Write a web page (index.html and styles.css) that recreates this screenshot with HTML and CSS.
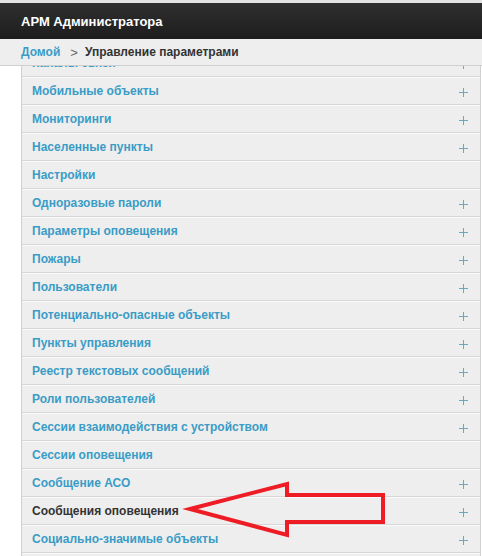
FILE: index.html
```html
<!DOCTYPE html>
<html>
<head>
<meta charset="utf-8">
<link rel="stylesheet" href="styles.css">
</head>
<body>
<div class="topstrip"></div>
<header class="appbar">АРМ Администратора</header>
<nav class="crumbs"><a class="crumb-link">Домой</a><span class="crumb-sep">&gt;</span><span class="crumb-current">Управление параметрами</span></nav>
<main class="viewport">
  <ul class="menu">
    <li class="row"><span class="label">Каналы связи</span><span class="plus"></span></li>
    <li class="row"><span class="label">Мобильные объекты</span><span class="plus"></span></li>
    <li class="row"><span class="label">Мониторинги</span><span class="plus"></span></li>
    <li class="row"><span class="label">Населенные пункты</span><span class="plus"></span></li>
    <li class="row"><span class="label">Настройки</span></li>
    <li class="row"><span class="label">Одноразовые пароли</span><span class="plus"></span></li>
    <li class="row"><span class="label">Параметры оповещения</span><span class="plus"></span></li>
    <li class="row"><span class="label">Пожары</span><span class="plus"></span></li>
    <li class="row"><span class="label">Пользователи</span><span class="plus"></span></li>
    <li class="row"><span class="label">Потенциально-опасные объекты</span><span class="plus"></span></li>
    <li class="row"><span class="label">Пункты управления</span><span class="plus"></span></li>
    <li class="row"><span class="label">Реестр текстовых сообщений</span><span class="plus"></span></li>
    <li class="row"><span class="label">Роли пользователей</span><span class="plus"></span></li>
    <li class="row"><span class="label">Сессии взаимодействия с устройством</span><span class="plus"></span></li>
    <li class="row"><span class="label">Сессии оповещения</span></li>
    <li class="row"><span class="label">Сообщение АСО</span><span class="plus"></span></li>
    <li class="row active"><span class="label">Сообщения оповещения</span><span class="plus"></span></li>
    <li class="row"><span class="label">Социально-значимые объекты</span><span class="plus"></span></li>
    <li class="row"><span class="label">Типы объектов</span><span class="plus"></span></li>
  </ul>
</main>
<svg class="arrow" width="482" height="556" viewBox="0 0 482 556">
  <polygon points="190,509 287,484 287,495 383,495 383,522 287,522 287,535" fill="none" stroke="#ee1c24" stroke-width="4" stroke-linejoin="miter"/>
</svg>
</body>
</html>
```

FILE: styles.css
```css
html, body {
  margin: 0;
  padding: 0;
  background: #fff;
  font-family: "Liberation Sans", Arial, sans-serif;
  width: 482px;
  height: 556px;
  overflow: hidden;
}
.topstrip {
  height: 3px;
  background: #e4e4e4;
}
.appbar {
  height: 36px;
  box-sizing: border-box;
  padding: 0 0 0 21px;
  display: flex;
  align-items: center;
  background: linear-gradient(#2f2f2f, #1d1d1d);
  color: #fff;
  font-weight: bold;
  font-size: 13px;
}
.crumbs {
  position: relative;
  z-index: 2;
  height: 27px;
  box-sizing: border-box;
  background: #eeeeee;
  border-bottom: 1px solid #cfcfcf;
  display: flex;
  align-items: center;
  padding-left: 21px;
  font-size: 12px;
  font-weight: bold;
}
.crumb-link {
  color: #3a9cc6;
}
.crumb-sep {
  color: #666;
  font-weight: normal;
  font-size: 13px;
  margin: 0 7px 0 10px;
}
.crumb-current {
  color: #333;
}
.viewport {
  height: 490px;
  overflow: hidden;
  margin-left: 21px;
  width: 460px;
}
.menu {
  list-style: none;
  margin: -17px 0 0 0;
  padding: 0;
  border-left: 1px solid #d0d0d0;
  border-right: 1px solid #d0d0d0;
}
.row {
  height: 28px;
  box-sizing: border-box;
  background: #eeeeee;
  border-top: 1px solid #fafafa;
  border-bottom: 1px solid #d6d6d6;
  display: flex;
  align-items: center;
  justify-content: space-between;
  padding: 0 12px 0 10px;
  font-size: 12px;
  font-weight: bold;
}
.label {
  color: #3a9cc6;
}
.row.active .label {
  color: #333;
}
.plus {
  width: 9px;
  height: 9px;
  position: relative;
  top: 1px;
}
.plus::before, .plus::after {
  content: "";
  position: absolute;
  background: #6aa9bb;
}
.plus::before {
  left: 0;
  top: 4px;
  width: 9px;
  height: 1px;
}
.plus::after {
  left: 4px;
  top: 0;
  width: 1px;
  height: 9px;
}
.arrow {
  position: absolute;
  left: 0;
  top: 0;
  pointer-events: none;
}
```
